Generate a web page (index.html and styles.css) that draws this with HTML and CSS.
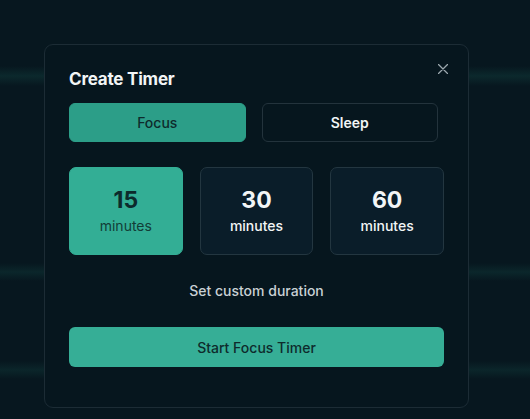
FILE: index.html
```html
<!DOCTYPE html>
<html lang="en">
<head>
  <meta charset="UTF-8">
  <meta name="viewport" content="width=device-width, initial-scale=1.0">
  <title>Create Timer</title>
  <link rel="stylesheet" href="styles.css">
</head>
<body>
  <div class="modal">
    <button type="button" class="close" aria-label="Close">
      <svg width="10" height="10" viewBox="0 0 10 10">
        <path d="M0.5 0.5L9.5 9.5M9.5 0.5L0.5 9.5" stroke="currentColor" stroke-width="1.3" stroke-linecap="round"/>
      </svg>
    </button>
    <h2 class="title">Create Timer</h2>

    <div class="modes">
      <button type="button" class="mode active">Focus</button>
      <button type="button" class="mode">Sleep</button>
    </div>

    <div class="durations">
      <button type="button" class="tile active">
        <span class="num">15</span>
        <span class="unit">minutes</span>
      </button>
      <button type="button" class="tile">
        <span class="num">30</span>
        <span class="unit">minutes</span>
      </button>
      <button type="button" class="tile">
        <span class="num">60</span>
        <span class="unit">minutes</span>
      </button>
    </div>

    <button type="button" class="custom">Set custom duration</button>

    <button type="button" class="start">Start Focus Timer</button>
  </div>
</body>
</html>
```

FILE: styles.css
```css
* {
  margin: 0;
  padding: 0;
  box-sizing: border-box;
}
body {
  font-family: Inter, "Noto Sans", sans-serif;
  width: 530px;
  height: 419px;
  overflow: hidden;
  padding: 44px 0 0 44px;
  background-color: #07171f;
  /* faint glowing bands behind the dialog */
  background-image:
    linear-gradient(to bottom, transparent, rgba(32, 120, 105, 0.18), transparent),
    linear-gradient(to bottom, transparent, rgba(32, 120, 105, 0.16), transparent),
    linear-gradient(to bottom, transparent, rgba(32, 120, 105, 0.15), transparent);
  background-size: 100% 20px, 100% 18px, 100% 18px;
  background-position: 0 66px, 0 263px, 0 361px;
  background-repeat: no-repeat;
}
button {
  font-family: inherit;
  border: none;
  background: none;
  cursor: pointer;
}
.modal {
  position: relative;
  width: 425px;
  height: 364px;
  padding: 22px 24px 0 24px;
  background-color: #06161e;
  border: 1px solid #1c2c35;
  border-radius: 9px;
}
.close {
  position: absolute;
  top: 18px;
  right: 19px;
  width: 12px;
  height: 12px;
  display: flex;
  align-items: center;
  justify-content: center;
  color: #9ca8ae;
}
.title {
  font-size: 17px;
  line-height: 24px;
  font-weight: 700;
  color: #f2f5f6;
  letter-spacing: -0.2px;
}
.modes {
  display: grid;
  grid-template-columns: 1fr 1fr;
  gap: 16px;
  margin: 12px 6px 0 0;
}
.mode {
  height: 39px;
  border-radius: 6px;
  font-size: 14px;
  font-weight: 600;
  color: #f2f5f6;
  border: 1px solid #23333c;
  background-color: #06161e;
}
.mode.active {
  font-weight: 500;
  color: #0e2b2c;
  background-color: #2c9e88;
  border-color: #2c9e88;
}
.durations {
  display: grid;
  grid-template-columns: repeat(3, 1fr);
  gap: 17px;
  margin-top: 25px;
}
.tile {
  height: 88px;
  border-radius: 7px;
  border: 1.5px solid #233640;
  background-color: #0a1d29;
  color: #f2f5f6;
  display: flex;
  flex-direction: column;
  align-items: center;
  justify-content: center;
  gap: 2px;
}
.tile .num {
  font-size: 23px;
  line-height: 28px;
  font-weight: 700;
}
.tile .unit {
  font-size: 14px;
  line-height: 20px;
  font-weight: 500;
}
.tile.active {
  background-color: #33ae95;
  border-color: #33ae95;
  color: #0c2a2b;
}
.tile.active .unit {
  font-weight: 400;
  color: #123d37;
}
.custom {
  display: block;
  width: 100%;
  margin-top: 26px;
  font-size: 14px;
  line-height: 20px;
  font-weight: 500;
  color: #c9d1d5;
}
.start {
  display: block;
  width: 100%;
  height: 40px;
  margin-top: 26px;
  border-radius: 6px;
  background-color: #36ae96;
  color: #0e2b2c;
  font-size: 14px;
  font-weight: 500;
}
```
